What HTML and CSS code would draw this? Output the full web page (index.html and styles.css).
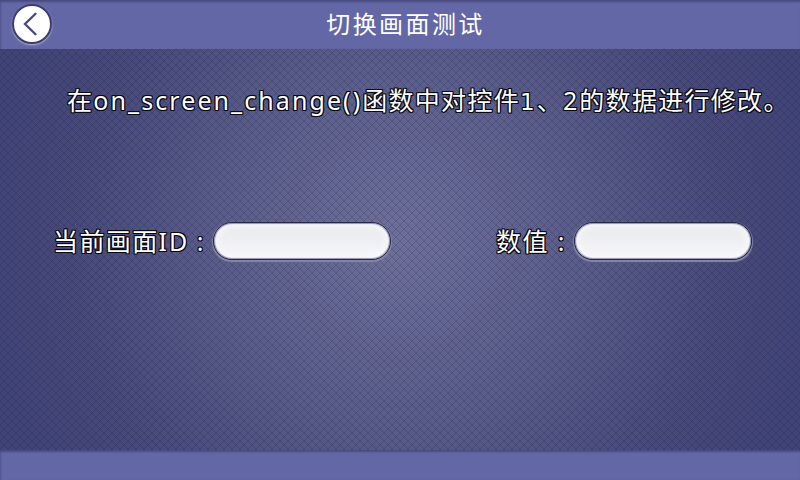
FILE: index.html
```
<!DOCTYPE html>
<html lang="zh-CN">
<head>
<meta charset="utf-8">
<title>切换画面测试</title>
<link rel="stylesheet" href="styles.css">
</head>
<body>
<div class="screen">
  <header class="topbar">
    <button class="back" aria-label="返回"><svg viewBox="0 0 36 36" width="36" height="36"><path d="M21.5 7.8 11 18 21.5 28.2" fill="none" stroke="#454781" stroke-width="2.3" stroke-linecap="round" stroke-linejoin="miter"/></svg></button>
    <h1>切换画面测试</h1>
  </header>
  <main>
    <p class="message">在<span class="latin">on_screen_change()</span>函数中对控件<span class="digit one">1</span>、<span class="digit">2</span>的数据进行修改。</p>
    <div class="fields">
      <div class="field"><span class="label">当前画面<span class="id">ID</span></span><span class="colon">:</span><div class="input"></div></div>
      <div class="field"><span class="label">数值</span><span class="colon">:</span><div class="input"></div></div>
    </div>
  </main>
  <footer></footer>
</div>
</body>
</html>
```
FILE: styles.css
```
* { box-sizing: border-box; }
body { margin: 0; }
.screen {
  width: 800px; height: 480px; overflow: hidden;
  display: flex; flex-direction: column;
  color: #fff;
  font-family: "Noto Sans", "Noto Sans CJK SC", sans-serif;
  font-size: 25px; line-height: 36px; white-space: nowrap;
}
.topbar {
  height: 49px; background: #6467a6;
  box-shadow: inset 0 3px 2px -1px #484b82, inset 2px 0 2px -1px #51548c;
  display: grid; grid-template-columns: 52px 1fr 41px; align-items: start;
}
.back {
  width: 40px; height: 40px; margin: 4px 0 0 12px; padding: 0;
  border: 2px solid #3a3c6c; border-radius: 50%; background: #fff;
  box-shadow: 0 1px 2px #b4b5d3;
}
.back svg { display: block; }
h1 {
  margin: 6px 0 0; text-align: center;
  font-size: 24px; font-weight: 400; letter-spacing: 2.4px;
}
main {
  flex: 1;
  background:
    linear-gradient(45deg, transparent 44%, rgba(20,24,64,.2) 44% 56%, transparent 56%) 0 0 / 8px 8px,
    linear-gradient(-45deg, transparent 44%, rgba(20,24,64,.2) 44% 56%, transparent 56%) 0 0 / 8px 8px,
    conic-gradient(rgba(20,24,64,.1) 25%, transparent 0 50%, rgba(20,24,64,.1) 0 75%, transparent 0) 0 0 / 2px 2px,
    radial-gradient(circle 420px at 400px 191px, #72759e 0, #5c5f8b 45%, #494c7c 78%, #434678 100%);
}
.message, .fields {
  text-shadow: 1px 0 #080810, -1px 0 #080810, 0 1px #080810, 0 -1px #080810,
    1px 1px #080810, -1px -1px #080810, 1px -1px #080810, -1px 1px #080810;
}
.message { margin: 33px 0 0 67px; letter-spacing: 1.3px; }
.latin { letter-spacing: 2.07px; }
.digit { letter-spacing: 2px; }
.one { font-family: "DejaVu Sans", sans-serif; font-size: 23px; }
.fields { display: flex; margin-top: 103px; padding-left: 53px; }
.field { display: flex; width: 443px; }
.field + .field { width: auto; }
.label { letter-spacing: 1.4px; }
.id { letter-spacing: 1.8px; }
.colon { width: 26px; text-align: center; }
.field .input { flex: none; }
.field:first-child .label { width: 134px; }
.field:last-child .label { width: 52px; }
.input {
  width: 178px; height: 38px; margin-top: -1px;
  border: 1px solid #262848; border-radius: 19px;
  background: linear-gradient(#e8e9ee, #f6f6f8);
  box-shadow: 0 1px 1px 1px #8587a7, inset 0 0 1px 1px #8f91b4, inset 0 0 7px 3px #fafafc;
}
footer {
  height: 30px; background: #6467a6;
  box-shadow: inset 0 3px 2px -1px #484b82, inset 2px 0 2px -1px #51548c;
}
```
